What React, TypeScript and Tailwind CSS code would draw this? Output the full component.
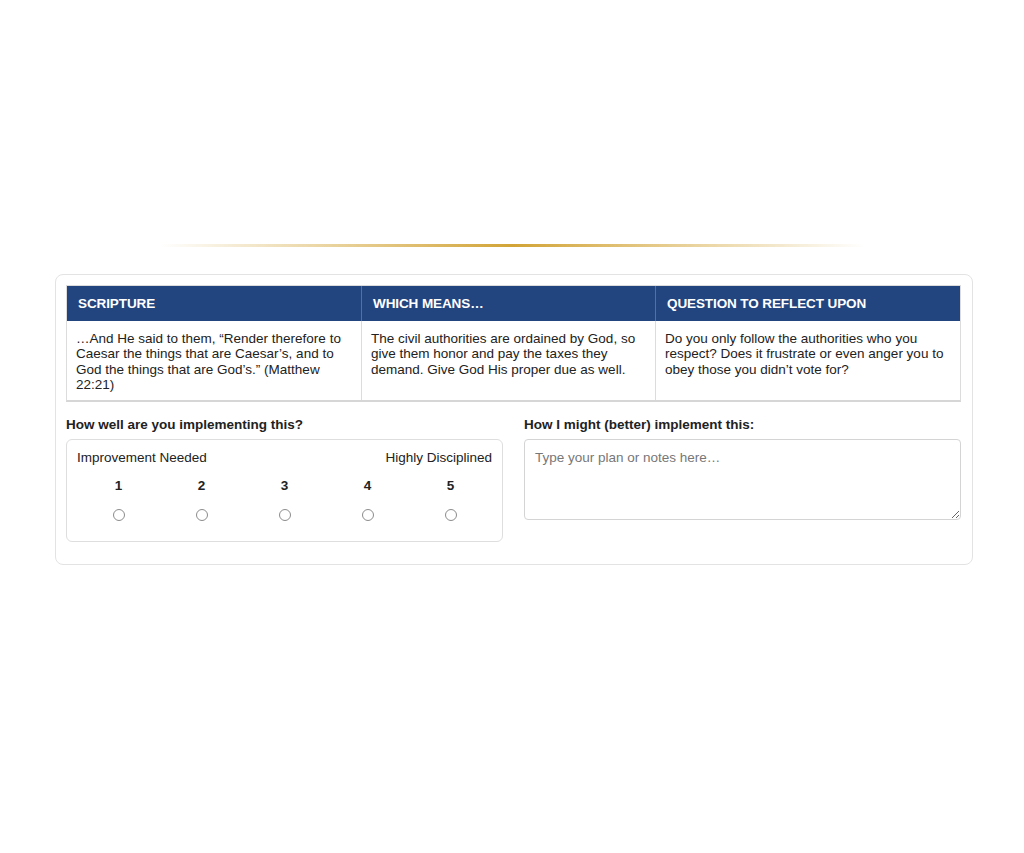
import { useState } from "react"

const columns = [
  {
    title: "SCRIPTURE",
    body: "…And He said to them, “Render therefore to Caesar the things that are Caesar’s, and to God the things that are God’s.” (Matthew 22:21)",
  },
  {
    title: "WHICH MEANS…",
    body: "The civil authorities are ordained by God, so give them honor and pay the taxes they demand. Give God His proper due as well.",
  },
  {
    title: "QUESTION TO REFLECT UPON",
    body: "Do you only follow the authorities who you respect? Does it frustrate or even anger you to obey those you didn’t vote for?",
  },
]

const App = () => {
  const [rating, setRating] = useState<number | null>(null)
  const [notes, setNotes] = useState("")

  return (
    <div className="min-h-[853px] bg-white pt-[244px] font-['Liberation_Sans',Arial,sans-serif] text-[13.5px] text-[#222]">
      {/* Gold divider */}
      <div className="ml-[160px] h-[3px] w-[705px] bg-gradient-to-r from-transparent via-[#d2a437] to-transparent" />

      {/* Card */}
      <div className="mt-[27px] ml-[55px] w-[918px] rounded-lg border border-[#e3e3e3] pr-[11px] pl-[10px] pt-[10px] pb-[22px]">
        {/* Table */}
        <div className="border border-[#dcdcdc] border-b-2 border-b-[#d6d6d6]">
          <div className="grid grid-cols-[294px_294px_1fr] bg-[#23457f] text-white">
            {columns.map((c, i) => (
              <div
                key={c.title}
                className={`h-[35px] px-[11px] font-bold leading-[35px] tracking-[-0.1px] ${i > 0 ? "border-l border-[#5470a0]" : ""}`}
              >
                {c.title}
              </div>
            ))}
          </div>
          <div className="grid grid-cols-[294px_294px_1fr]">
            {columns.map((c, i) => (
              <div
                key={c.title}
                className={`px-[9px] pt-[10px] pb-[8px] leading-[15.3px] ${i > 0 ? "border-l border-[#dcdcdc]" : ""}`}
              >
                {c.body}
              </div>
            ))}
          </div>
        </div>

        {/* Bottom */}
        <div className="mt-[15px] grid grid-cols-2 gap-[21px]">
          <div>
            <div className="mb-[7px] font-bold leading-[15px]">How well are you implementing this?</div>
            <div className="rounded-md border border-[#dedede] px-[10px] pt-[10px] pb-[20px]">
              <div className="flex justify-between leading-[15px]">
                <span>Improvement Needed</span>
                <span>Highly Disciplined</span>
              </div>
              <div className="mt-[13px] grid grid-cols-5">
                {[1, 2, 3, 4, 5].map((n) => (
                  <label key={n} className="flex flex-col items-center">
                    <span className="font-bold leading-[15px]">{n}</span>
                    <input
                      type="radio"
                      name="rating"
                      checked={rating === n}
                      onChange={() => setRating(n)}
                      className="mt-[16px] h-[12px] w-[12px] appearance-none rounded-full border border-[#8c8c8c] bg-white checked:border-[4px] checked:border-[#23457f]"
                    />
                  </label>
                ))}
              </div>
            </div>
          </div>

          <div>
            <div className="mb-[7px] font-bold leading-[15px]">How I might (better) implement this:</div>
            <textarea
              value={notes}
              onChange={(e) => setNotes(e.target.value)}
              placeholder="Type your plan or notes here…"
              className="block h-[81px] w-full rounded border border-[#d4d4d4] px-[10px] py-[10px] text-[13.5px] leading-[15px] placeholder:text-[#777] focus:outline-none"
            />
          </div>
        </div>
      </div>
    </div>
  )
}

export default App
